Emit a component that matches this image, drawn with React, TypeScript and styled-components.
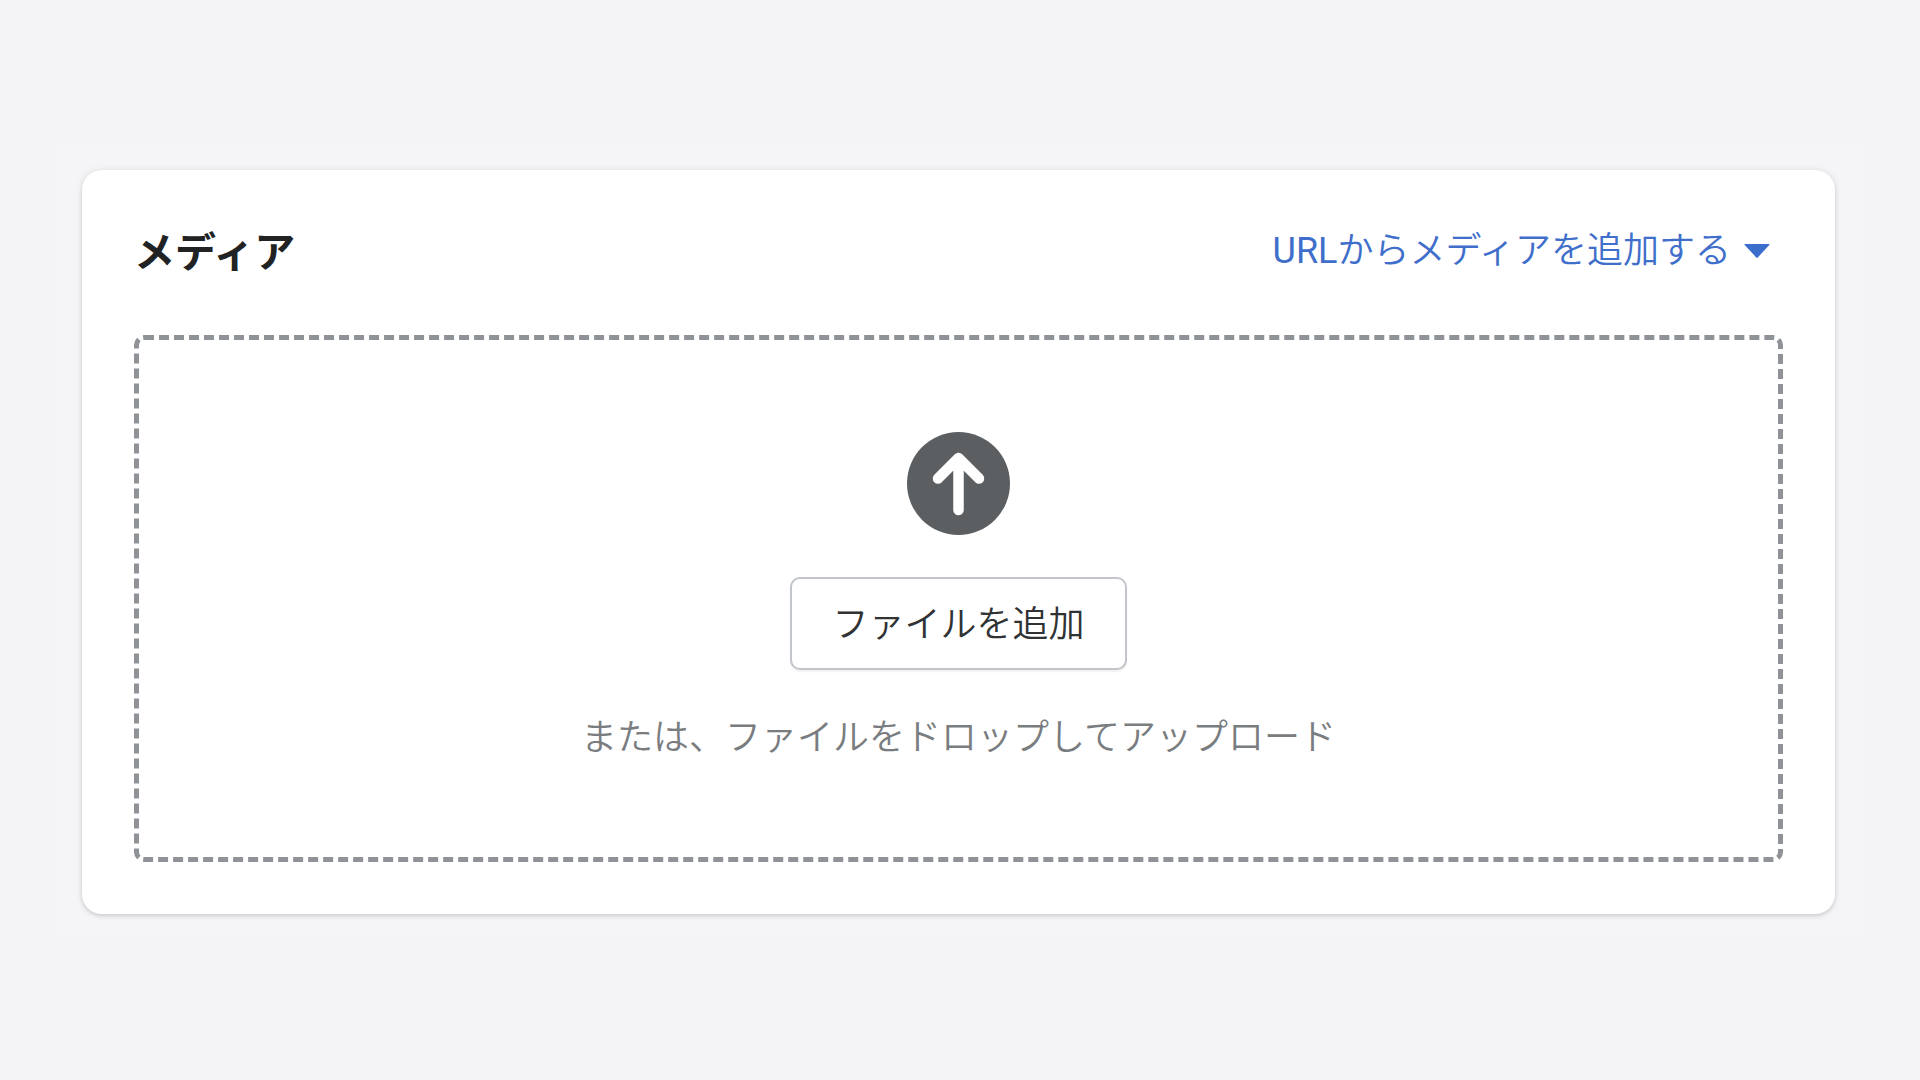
import React, { useRef } from "react";
import styled, { createGlobalStyle } from "styled-components";

const GlobalStyle = createGlobalStyle`
  *, *::before, *::after { box-sizing: border-box; }
  body {
    margin: 0;
    background: #f4f4f7;
    color: #202223;
    font-family: Roboto, "Noto Sans CJK JP", sans-serif;
    font-size: 36px;
    font-weight: 350;
    line-height: 48px;
  }
`;

const Page = styled.main`
  min-height: 100vh;
  padding: 144px 57px;
`;

const Backdrop = styled.div`
  padding: 26px 28px 21px 25px;
  background: #f5f5f8;
`;

const Card = styled.section`
  padding: 52px;
  border-radius: 20px;
  background: #fff;
  box-shadow: 0 0 8px rgba(23, 24, 24, 0.07), 0 2px 4px rgba(0, 0, 0, 0.13);
`;

const Header = styled.header`
  display: flex;
  align-items: center;
  justify-content: space-between;
  margin-bottom: 51px;
`;

const Title = styled.h2`
  margin: 0;
  font-size: 41px;
  font-weight: 700;
  line-height: 62px;
`;

const MenuButton = styled.button`
  display: flex;
  align-items: center;
  gap: 13px;
  padding: 0 13px 4px;
  border: 0;
  background: none;
  color: #3f6fca;
  font: inherit;
  cursor: pointer;
`;

const Latin = styled.span`
  font-weight: 400;
`;

const DropZone = styled.div`
  display: flex;
  flex-direction: column;
  align-items: center;
  gap: 42px;
  padding: 92px 24px 93px;
  border: 5px dashed #8f9297;
  border-radius: 10px;
`;

const AddButton = styled.button`
  padding: 22px 40px 19px;
  border: 2px solid #c2c5c9;
  border-radius: 10px;
  background: #fff;
  box-shadow: 0 2px 2px rgba(0, 0, 0, 0.06);
  color: #303234;
  font: inherit;
  cursor: pointer;
`;

const Hint = styled.p`
  margin: 0;
  color: #7a7d80;
  line-height: 52px;
  text-align: center;
`;

const Icon = styled.svg`
  display: block;
  flex: none;
`;

function UploadIcon() {
  return (
    <Icon width="103" height="103" viewBox="0 0 103 103" aria-hidden="true">
      <circle cx="51.5" cy="51.5" r="51.5" fill="#5c5f62" />
      <path
        d="M51.5 78V26M31 46.5L51.5 26L72 46.5"
        fill="none"
        stroke="#fff"
        strokeWidth="10.5"
        strokeLinecap="round"
        strokeLinejoin="round"
      />
    </Icon>
  );
}

function CaretIcon() {
  return (
    <Icon width="26" height="14" viewBox="0 0 26 14" aria-hidden="true">
      <path d="M1 0H25Q26 0 25.3 .9L14 13.2Q13 14.2 12 13.2L.7 .9Q0 0 1 0Z" fill="#3b6ecc" />
    </Icon>
  );
}

export default function App() {
  const fileInput = useRef<HTMLInputElement>(null);
  return (
    <>
      <GlobalStyle />
      <Page>
        <Backdrop>
          <Card aria-labelledby="media-title">
            <Header>
              <Title id="media-title">メディア</Title>
              <MenuButton type="button" aria-haspopup="menu">
                <span>
                  <Latin>URL</Latin>からメディアを追加する
                </span>
                <CaretIcon />
              </MenuButton>
            </Header>
            <DropZone>
              <UploadIcon />
              <input ref={fileInput} type="file" multiple hidden aria-label="ファイルを追加" />
              <AddButton type="button" onClick={() => fileInput.current?.click()}>
                ファイルを追加
              </AddButton>
              <Hint>または、ファイルをドロップしてアップロード</Hint>
            </DropZone>
          </Card>
        </Backdrop>
      </Page>
    </>
  );
}
